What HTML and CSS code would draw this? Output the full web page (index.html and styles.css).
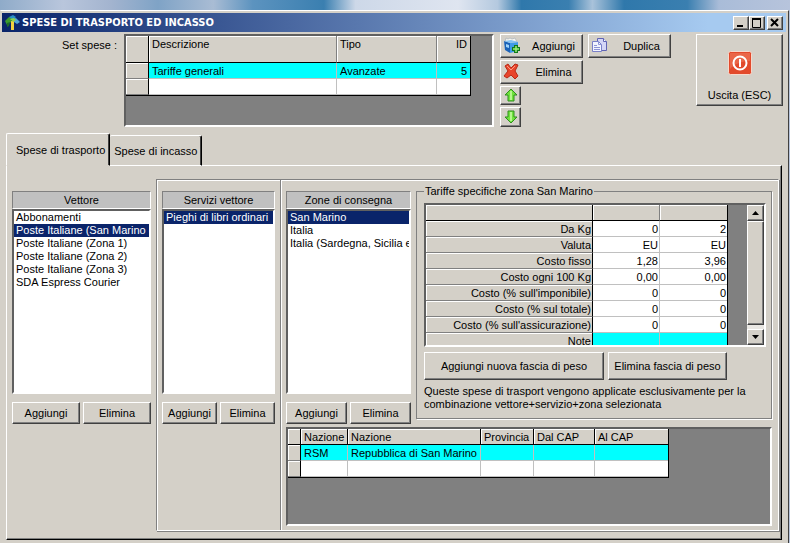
FILE: index.html
```html
<!DOCTYPE html>
<html lang="it">
<head>
    <meta charset="UTF-8">
    <meta name="viewport" content="width=device-width, initial-scale=1.0">
    <title>Spese di trasporto ed incasso</title>
    <link rel="stylesheet" href="styles.css">
</head>
<body>
<div class="window">
    <header class="titlebar">
        <svg class="app-icon" width="16" height="16" viewBox="0 0 16 16">
            <path d="M7 6h3v9H7z" fill="#f2d040"/>
            <path d="M1 6l4-4 3 1-1 4-4 3z" fill="#3d9c2c"/>
            <path d="M5 2l4-2 3 2-3 3z" fill="#2c8fc4"/>
            <path d="M8 4l4-1 4 4-3 2-3-2z" fill="#4fa6d8"/>
            <path d="M6 4l4-1 2 2-3 2z" fill="#8ed04a"/>
            <path d="M3 8l3-1-1 4-2 1z" fill="#1f6b2a"/>
        </svg>
        <h1>SPESE DI TRASPORTO ED INCASSO</h1>
        <div class="window-buttons">
            <button type="button" aria-label="Riduci">
                <svg width="10" height="10" viewBox="0 0 10 10"><path d="M1 8h6" stroke="#000" stroke-width="2"/></svg>
            </button>
            <button type="button" aria-label="Ingrandisci">
                <svg width="10" height="10" viewBox="0 0 10 10"><path d="M.5 1v8.500h8V1M0 1h9" fill="none" stroke="#000"/><path d="M0 1h9" stroke="#000" stroke-width="2"/></svg>
            </button>
            <button type="button" class="close" aria-label="Chiudi">
                <svg width="10" height="10" viewBox="0 0 10 10"><path d="M1 1l7 7M8 1L1 8" stroke="#000" stroke-width="2"/></svg>
            </button>
        </div>
    </header>

    <!-- Set spese -->
    <section class="sets">
        <span class="sets-label" id="setLabel">Set spese :</span>
        <div class="grid-box sets-grid">
            <table class="grid" aria-labelledby="setLabel">
                <colgroup><col class="w-23"><col class="w-188"><col class="w-100"><col class="w-34"></colgroup>
                <thead>
                    <tr><th></th><th>Descrizione</th><th>Tipo</th><th class="num">ID</th></tr>
                </thead>
                <tbody>
                    <tr class="current"><th></th><td>Tariffe generali</td><td>Avanzate</td><td class="num">5</td></tr>
                    <tr><th></th><td></td><td></td><td></td></tr>
                </tbody>
            </table>
        </div>
        <div class="tools">
            <div class="tools-row">
                <button type="button" class="tool">
                    <svg width="18" height="18" viewBox="0 0 18 18">
                        <path d="M2 5l1-4 2 1 2-1 2 1 3-1 2 4z" fill="#f4f4f0" stroke="#a8b0b8" stroke-width=".7"/>
                        <path d="M1 4l6 2v10l-5-3z" fill="#1a62b8"/>
                        <path d="M7 6l8-1v9l-8 2z" fill="#3f9be8"/>
                        <path d="M1 4l6 2 8-1-7-2z" fill="#86c4f4"/>
                        <path d="M3 7l3 1v3l-3-1z" fill="#9fd4fa"/>
                        <path d="M9 10h2V8h4v2h2v4h-2v2h-4v-2H9z" fill="#117a1b"/>
                        <path d="M10 12h6M13 9v6" stroke="#9cf07a" stroke-width="1.500"/>
                    </svg>
                    <span>Aggiungi</span>
                </button>
                <button type="button" class="tool">
                    <svg width="18" height="18" viewBox="0 0 18 18">
                        <path d="M6.500 1.500h6l3 3v9h-9z" fill="#d4d6f6" stroke="#6064b4"/>
                        <path d="M12.500 1.500v3h3" fill="#fff" stroke="#6064b4"/>
                        <path d="M1.500 4.500h6l3 3v7h-9z" fill="#f2f4ff" stroke="#7a80c8"/>
                        <path d="M7.500 4.500v3h3M3 8.500h3M3 10.500h6M3 12.500h6" fill="none" stroke="#8d94d6"/>
                    </svg>
                    <span>Duplica</span>
                </button>
            </div>
            <button type="button" class="tool">
                <svg width="18" height="18" viewBox="0 0 18 18">
                    <path d="M2 3l3-2 3 4 4-4 3 1-3 6 3 5-3 3-4-4-4 3-3-2 4-5z" fill="#e8452c" stroke="#b92a16"/>
                    <path d="M4 3l4 4 4-4" fill="none" stroke="#ff9a80"/>
                </svg>
                <span>Elimina</span>
            </button>
            <button type="button" class="arrow" aria-label="Sposta su">
                <svg width="14" height="14" viewBox="0 0 14 14"><path d="M7 1l6 6h-3v6H4V7H1z" fill="#6fe23c" stroke="#2f8f1c"/><path d="M7 3v9" stroke="#b4f78c" stroke-width="2"/></svg>
            </button>
            <button type="button" class="arrow" aria-label="Sposta giù">
                <svg width="14" height="14" viewBox="0 0 14 14"><path d="M7 13l6-6h-3V1H4v6H1z" fill="#6fe23c" stroke="#2f8f1c"/><path d="M7 2v9" stroke="#b4f78c" stroke-width="2"/></svg>
            </button>
        </div>
        <button type="button" class="exit">
            <svg width="24" height="24" viewBox="0 0 24 24">
                <rect x=".5" y=".5" width="23" height="23" rx="2" fill="#e24a2c" stroke="#f6d8cc"/>
                <path d="M2 2h20v8C14 10 6 13 2 18z" fill="#ea6648"/>
                <circle cx="12" cy="12" r="6.500" fill="none" stroke="#fff" stroke-width="2"/>
                <path d="M12 8v8" stroke="#fff" stroke-width="2"/>
            </svg>
            <span>Uscita (ESC)</span>
        </button>
    </section>

    <div class="tabs" role="tablist">
        <button type="button" class="tab active" role="tab" aria-selected="true">Spese di trasporto</button>
        <button type="button" class="tab" role="tab" aria-selected="false">Spese di incasso</button>
    </div>

    <main class="panel">
        <section class="column vettori">
            <label class="list-title" for="vettore">Vettore</label>
            <select class="list" id="vettore" size="14">
                <option>Abbonamenti</option>
                <option selected>Poste Italiane (San Marino e</option>
                <option>Poste Italiane (Zona 1)</option>
                <option>Poste Italiane (Zona 2)</option>
                <option>Poste Italiane (Zona 3)</option>
                <option>SDA Espress Courier</option>
            </select>
            <div class="list-buttons">
                <button type="button">Aggiungi</button>
                <button type="button">Elimina</button>
            </div>
        </section>

        <div class="frame">
            <section class="column servizi">
                <label class="list-title" for="servizi">Servizi vettore</label>
                <select class="list" id="servizi" size="14">
                    <option selected>Pieghi di libri ordinari</option>
                </select>
                <div class="list-buttons">
                    <button type="button">Aggiungi</button>
                    <button type="button">Elimina</button>
                </div>
            </section>

            <div class="zone">
                <div class="zone-top">
                    <section class="column zone-list">
                        <label class="list-title" for="zone">Zone di consegna</label>
                        <select class="list" id="zone" size="14">
                            <option selected>San Marino</option>
                            <option>Italia</option>
                            <option>Italia (Sardegna, Sicilia e</option>
                        </select>
                        <div class="list-buttons">
                            <button type="button">Aggiungi</button>
                            <button type="button">Elimina</button>
                        </div>
                    </section>

                    <!-- Tariffe della zona selezionata -->
                    <fieldset class="rates">
                        <legend>Tariffe specifiche zona San Marino</legend>
                        <div class="grid-box rates-grid">
                            <table class="grid">
                                <colgroup><col class="w-168"><col class="w-67"><col class="w-67"></colgroup>
                                <thead>
                                    <tr><th></th><th></th><th></th></tr>
                                </thead>
                                <tbody>
                                    <tr><th>Da Kg</th><td>0</td><td>2</td></tr>
                                    <tr><th>Valuta</th><td>EU</td><td>EU</td></tr>
                                    <tr><th>Costo fisso</th><td>1,28</td><td>3,96</td></tr>
                                    <tr><th>Costo ogni 100 Kg</th><td>0,00</td><td>0,00</td></tr>
                                    <tr><th>Costo (% sull'imponibile)</th><td>0</td><td>0</td></tr>
                                    <tr><th>Costo (% sul totale)</th><td>0</td><td>0</td></tr>
                                    <tr><th>Costo (% sull'assicurazione)</th><td>0</td><td>0</td></tr>
                                    <tr class="current"><th>Note</th><td></td><td></td></tr>
                                </tbody>
                            </table>
                            <div class="scrollbar">
                                <button type="button" aria-label="Scorri su"><svg width="7" height="4" viewBox="0 0 7 4"><path d="M0 4l3.500-4L7 4z"/></svg></button>
                                <div class="thumb"></div>
                                <button type="button" aria-label="Scorri giù"><svg width="7" height="4" viewBox="0 0 7 4"><path d="M0 0l3.500 4L7 0z"/></svg></button>
                            </div>
                        </div>
                        <div class="rates-buttons">
                            <button type="button" class="wide">Aggiungi nuova fascia di peso</button>
                            <button type="button">Elimina fascia di peso</button>
                        </div>
                        <p>Queste spese di trasport vengono applicate esclusivamente per la combinazione vettore+servizio+zona selezionata</p>
                    </fieldset>
                </div>

                <div class="grid-box nations-grid">
                    <table class="grid">
                        <colgroup><col class="w-13"><col class="w-47"><col class="w-133"><col class="w-53"><col class="w-61"><col class="w-74"></colgroup>
                        <thead>
                            <tr><th></th><th>Nazione</th><th>Nazione</th><th>Provincia</th><th>Dal CAP</th><th>Al CAP</th></tr>
                        </thead>
                        <tbody>
                            <tr class="current"><th></th><td>RSM</td><td>Repubblica di San Marino</td><td></td><td></td><td></td></tr>
                            <tr><th></th><td></td><td></td><td></td><td></td><td></td></tr>
                        </tbody>
                    </table>
                </div>
            </div>
        </div>
    </main>
</div>
</body>
</html>
```

FILE: styles.css
```css
* {
    box-sizing: border-box;
}
body {
    margin: 0;
    min-height: 100vh;
    display: flex;
    flex-direction: column;
    background: linear-gradient(to right, #8fabc9, #b9c6dc 8%, #a3b4cf 14%, #7fa3c6 20%, #a9bcd4 27%, #5c93bf 32%, #3a7fb0 41%, #cdd8e8 45%, #dfe5f0 58%, #b4c9df 63%, #2f78ab 66%, #3a7fb0 72%, #a9c2da 75%, #2f78ab 79%, #3a7fb0 87%, #a9bcd8 91%, #b7c4dc);
    color: #000;
    font: 11px/13px "Liberation Sans", Arial, sans-serif;
}
button {
    margin: 0;
    padding: 0;
    background: #d4d0c8;
    color: #000;
    font: inherit;
    border: 1px solid;
    border-color: #fff #404040 #404040 #fff;
    box-shadow: inset -1px -1px #808080;
    white-space: nowrap;
}
svg {
    display: block;
    flex: none;
}
.window {
    flex: 1;
    display: flex;
    flex-direction: column;
    margin: 10px 1px 0 0;
    padding: 2px 2px 0 1px;
    background: #d4d0c8;
    border: 1px solid;
    border-color: #fff #404040 #d4d0c8 #d4d0c8;
    border-bottom: 0;
}

/* Title bar */
.titlebar {
    display: flex;
    align-items: center;
    height: 19px;
    padding: 0 3px 0 2px;
    background: linear-gradient(to right, #0a246a, #a6caf0 90%);
}
.titlebar h1 {
    flex: 1;
    margin: 0 0 0 2px;
    color: #fff;
    font: bold 11px/14px "DejaVu Sans Condensed", Tahoma, sans-serif;
}
.window-buttons {
    display: flex;
}
.window-buttons button {
    display: grid;
    place-items: center;
    width: 16px;
    height: 14px;
}
.window-buttons .close {
    margin-left: 2px;
}

/* Data grids */
.grid-box {
    overflow: hidden;
    background: #808080;
    border: 2px solid;
    border-color: #606060 #fff #fff #606060;
}
.grid {
    table-layout: fixed;
    width: 0;
    border-spacing: 0;
    border-right: 1px solid #000;
    border-bottom: 1px solid #000;
}
.grid th,
.grid td {
    height: 16px;
    padding: 1px 3px 0;
    overflow: hidden;
    border: 0 solid #c0c0c0;
    border-width: 0 1px 1px 0;
    font-weight: normal;
    line-height: 14px;
    text-align: left;
    white-space: nowrap;
}
.grid th {
    background: #d4d0c8;
    border-color: #808080;
    box-shadow: inset 1px 1px #fff;
}
.grid td {
    background: #fff;
}
.grid thead th {
    border-bottom-color: #000;
}
.grid th:first-child {
    border-right-color: #000;
}
.grid tr > :last-child {
    border-right: 0;
}
.grid .current td {
    background: #0ff;
}
.grid .num {
    text-align: right;
}
.w-13 { width: 13px; }
.w-23 { width: 23px; }
.w-34 { width: 33px; }
.w-47 { width: 47px; }
.w-53 { width: 53px; }
.w-61 { width: 61px; }
.w-67 { width: 67px; }
.w-74 { width: 73px; }
.w-100 { width: 100px; }
.w-133 { width: 133px; }
.w-168 { width: 167px; }
.w-188 { width: 188px; }

/* Set spese */
.sets {
    display: flex;
    height: 101px;
    padding: 2px 3px 6px 0;
}
.sets-label {
    width: 122px;
    padding: 5px 7px 0 0;
    text-align: right;
}
.sets-grid {
    flex: 1;
    max-width: 600px;
}
.sets-grid thead th {
    height: 27px;
    vertical-align: top;
}
.tools {
    display: flex;
    flex-direction: column;
    align-items: flex-start;
    gap: 2px;
    margin-left: 6px;
}
.tools-row {
    display: flex;
    gap: 5px;
}
.tool {
    display: flex;
    align-items: center;
    width: 83px;
    height: 24px;
    padding-left: 2px;
}
.tool span {
    flex: 1;
    padding: 1px 0 0 4px;
}
.arrow {
    display: grid;
    place-items: center;
    width: 21px;
    height: 20px;
}
.exit {
    display: flex;
    flex-direction: column;
    align-items: center;
    justify-content: space-between;
    width: 87px;
    height: 72px;
    margin-left: 25px;
    padding: 16px 0 3px;
}

/* Tabs */
.tabs {
    z-index: 1;
    display: flex;
    align-items: flex-end;
    padding-left: 4px;
}
.tab {
    height: 31px;
    padding: 2px 4px 0;
    border-color: #fff #000 #fff #fff;
    border-left: 0;
    border-radius: 2px 2px 0 0;
    box-shadow: inset -1px 0 #404040;
}
.tab.active {
    height: 33px;
    padding: 2px 4px 0 9px;
    border-left: 1px solid #fff;
    border-bottom-color: #d4d0c8;
}
.panel {
    flex: 1;
    display: flex;
    align-items: flex-start;
    margin: -1px 4px 3px;
    padding: 13px 2px 8px 5px;
    border: 1px solid;
    border-color: #fff #000 #000 #fff;
    box-shadow: inset -1px -1px #808080;
}

/* List columns */
.column {
    display: flex;
    flex-direction: column;
    flex: none;
}
.vettori {
    width: 139px;
    margin-right: 5px;
    padding-top: 12px;
}
.servizi {
    width: 124px;
    padding: 11px 5px 0;
    border-right: 1px solid #808080;
}
.zone-list {
    width: 125px;
}
.list-title {
    padding: 1px;
    background: #c0c0c0;
    border: 1px solid;
    border-color: #808080 #fff #fff #808080;
    line-height: 14px;
    text-align: center;
}
.list {
    width: 100%;
    height: 185px;
    padding: 0;
    overflow: hidden;
    background: #fff;
    border: 2px solid;
    border-color: #606060 #fff #fff #606060;
    border-radius: 0;
    outline: 0;
    font: inherit;
}
.list option {
    height: 13px;
    min-height: 13px;
    padding: 0 2px;
    overflow: hidden;
    line-height: 14px;
}
.list option:checked {
    background: linear-gradient(#0a246a, #0a246a);
    -webkit-text-fill-color: #fff;
}
.list-buttons {
    display: flex;
    gap: 3px;
    margin-top: 8px;
}
.list-buttons button {
    flex: 1;
    height: 22px;
}

/* Frame with services, zones and rates */
.frame {
    flex: 1;
    align-self: stretch;
    display: flex;
    min-width: 0;
    border: 1px solid;
    border-color: #808080 #fff #fff #808080;
    box-shadow: inset 1px 1px #fff, 1px 1px #808080;
}
.zone {
    flex: 1;
    display: flex;
    flex-direction: column;
    min-width: 0;
    padding: 11px 6px 4px 4px;
    border-left: 1px solid #fff;
}
.zone-top {
    display: flex;
    align-items: flex-start;
    gap: 5px;
}
.rates {
    flex: 1;
    min-width: 0;
    margin: -6px 0 0;
    padding: 5px 5px 7px 7px;
    border: 1px solid #808080;
    box-shadow: 1px 1px #fff;
}
.rates legend {
    padding: 0 1px;
}
.rates-grid {
    display: flex;
    height: 144px;
}
.rates-grid .grid {
    flex: none;
}
.rates-grid th,
.rates-grid td {
    padding: 1px 1px 0;
    text-align: right;
}
.rates-grid .current td {
    border-bottom-color: #0ff;
}
.scrollbar {
    display: flex;
    flex-direction: column;
    width: 17px;
    margin-left: auto;
    background: #e9e7e3;
}
.scrollbar button,
.thumb {
    background: #d4d0c8;
    border: 1px solid;
    border-color: #fff #404040 #404040 #fff;
}
.scrollbar button {
    display: grid;
    place-items: center;
    height: 16px;
}
.thumb {
    flex: 1;
    margin-bottom: 4px;
    box-shadow: inset -1px -1px #808080;
}
.rates-buttons {
    display: flex;
    gap: 4px;
    margin-top: 5px;
}
.rates-buttons button {
    width: 119px;
    height: 28px;
}
.rates-buttons .wide {
    width: 180px;
}
.rates p {
    max-width: 330px;
    margin: 5px 0 0;
}
.nations-grid {
    flex: 1;
    margin-top: 3px;
}
.nations-grid thead th {
    border-right-color: #000;
}
```
